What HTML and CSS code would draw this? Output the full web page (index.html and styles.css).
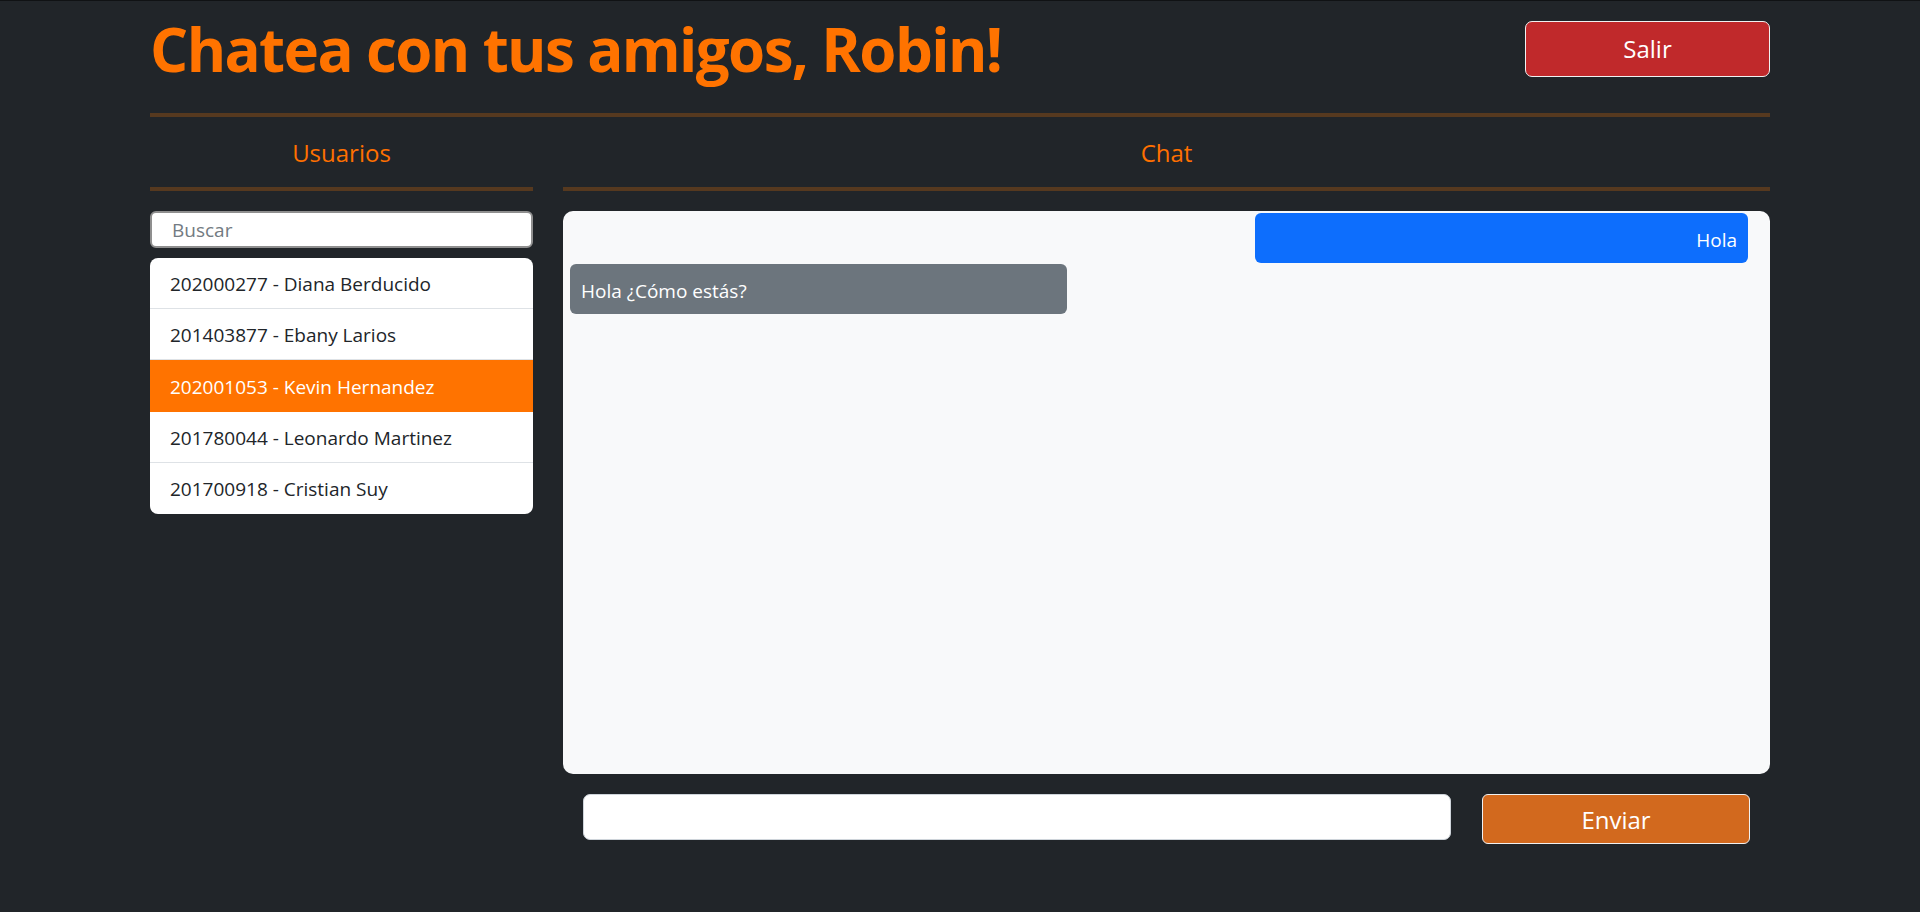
FILE: index.html
```html
<!DOCTYPE html>
<html lang="es">
<head>
<meta charset="utf-8">
<title>Chat</title>
<link rel="stylesheet" href="styles.css">
</head>
<body>
<div class="page">
  <div class="container">
    <header class="header">
      <h1 class="title">Chatea con tus amigos, Robin!</h1>
      <button class="btn btn-exit">Salir</button>
    </header>
    <hr class="rule rule-top">
    <main class="columns">
      <section class="col-users">
        <h2 class="col-title">Usuarios</h2>
        <hr class="rule">
        <input class="search" type="text" placeholder="Buscar">
        <ul class="user-list">
          <li class="user">202000277 - Diana Berducido</li>
          <li class="user">201403877 - Ebany Larios</li>
          <li class="user active">202001053 - Kevin Hernandez</li>
          <li class="user">201780044 - Leonardo Martinez</li>
          <li class="user">201700918 - Cristian Suy</li>
        </ul>
      </section>
      <section class="col-chat">
        <h2 class="col-title">Chat</h2>
        <hr class="rule">
        <div class="chat-box">
          <div class="msg msg-out">Hola</div>
          <div class="msg msg-in">Hola ¿Cómo estás?</div>
        </div>
        <div class="composer">
          <input class="composer-input" type="text">
          <button class="btn btn-send">Enviar</button>
        </div>
      </section>
    </main>
  </div>
</div>
</body>
</html>
```
FILE: styles.css
```css
html, body {
  margin: 0;
  padding: 0;
}
body {
  background: #212529;
  font-family: "Open Sans", "Noto Sans", sans-serif;
  color: #212529;
}
.page {
  border-top: 1px solid #101214;
  min-height: 911px;
}
.container {
  width: 1620px;
  margin: 0 auto;
}
.header {
  display: flex;
  justify-content: space-between;
  align-items: flex-start;
  padding-top: 20px;
}
.title {
  margin: 0;
  font-size: 60px;
  line-height: 56px;
  font-weight: 700;
  color: #ff7300;
  letter-spacing: -1.6px;
}
.btn {
  font-family: inherit;
  color: #fff;
  border: 1px solid #f1f1f1;
  cursor: pointer;
  font-size: 24px;
  line-height: 30px;
}
.btn-exit {
  width: 245px;
  height: 56px;
  background: #c0292b;
  border-radius: 7px;
}
.rule {
  border: 0;
  height: 4px;
  background: #56391f;
  margin: 0;
}
.rule-top {
  margin-top: 36px;
}
.columns {
  display: grid;
  grid-template-columns: 383px 1fr;
  column-gap: 30px;
}
.col-title {
  margin: 21px 0 19px;
  text-align: center;
  font-weight: 400;
  font-size: 24px;
  line-height: 30px;
  color: #ff7000;
}
.col-users .rule,
.col-chat .rule {
  margin-bottom: 20px;
}
.search {
  display: block;
  box-sizing: border-box;
  width: 100%;
  height: 37px;
  border: 2px solid #8f8f8f;
  border-radius: 6px;
  background: #fff;
  padding: 1px 0 0 20px;
  font-family: inherit;
  font-size: 19px;
  margin: 0 0 10px;
  outline: none;
}
.search::placeholder {
  color: #737b82;
}
.user-list {
  list-style: none;
  margin: 0;
  padding: 0;
  background: #fff;
  border-radius: 8px;
  overflow: hidden;
}
.user {
  padding: 11px 20px 9px;
  font-size: 19px;
  line-height: 30px;
  border-bottom: 1px solid #dee2e6;
  color: #212529;
}
.user:last-child {
  border-bottom: 0;
  padding-bottom: 10px;
}
.user.active {
  background: #ff7300;
  color: #fff;
  border-bottom-color: #ff7300;
  padding-top: 12px;
}
.chat-box {
  height: 563px;
  box-sizing: border-box;
  background: #f8f9fa;
  border-radius: 10px;
  padding: 2px 22px 0 7px;
  display: flex;
  flex-direction: column;
  gap: 1px;
}
.msg {
  box-sizing: border-box;
  height: 50px;
  padding: 12px 11px 8px;
  font-size: 19px;
  line-height: 30px;
  color: #fff;
  border-radius: 6px;
}
.msg-out {
  align-self: flex-end;
  width: 41.85%;
  background: #0d6efd;
  text-align: right;
}
.msg-in {
  align-self: flex-start;
  width: 42.2%;
  background: #6c757d;
}
.composer {
  display: flex;
  align-items: flex-start;
  gap: 31px;
  padding: 20px 20px 0;
}
.composer-input {
  flex: 1;
  height: 46px;
  box-sizing: border-box;
  border: 1px solid #ced4da;
  border-radius: 7px;
  background: #fff;
  outline: none;
}
.btn-send {
  width: 268px;
  height: 50px;
  background: #d2691e;
  border-radius: 6px;
  padding-top: 2px;
}
```
